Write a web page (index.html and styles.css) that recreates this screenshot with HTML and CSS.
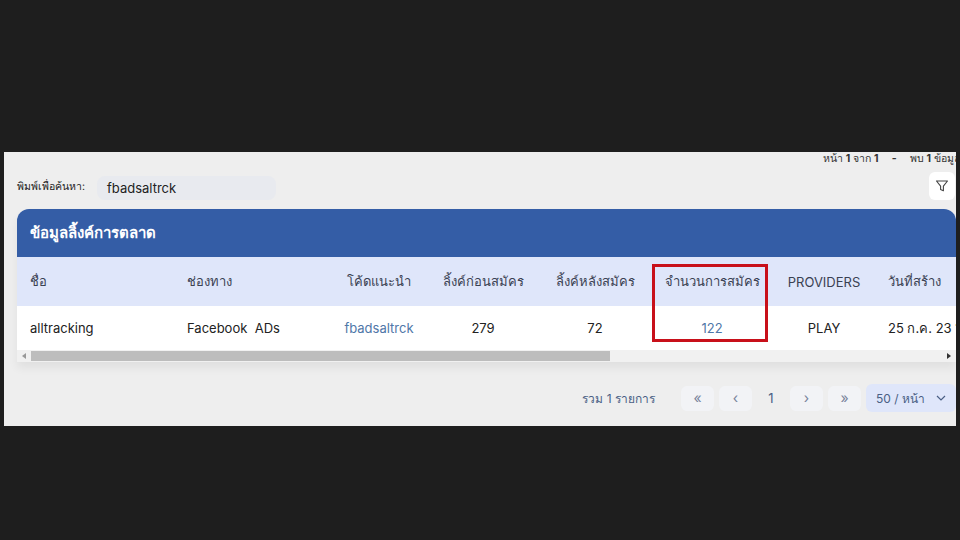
FILE: index.html
```html
<!DOCTYPE html>
<html lang="th">
<head>
    <meta charset="UTF-8">
    <meta name="viewport" content="width=device-width, initial-scale=1.0">
    <title>ข้อมูลลิ้งค์การตลาด</title>
    <link rel="stylesheet" href="styles.css">
</head>
<body>
    <div class="screen">
        <div class="page-info">
            <span>หน้า <b>1</b> จาก <b>1</b></span>
            <b class="dash">-</b>
            <span>พบ <b>1</b> ข้อมูล</span>
        </div>

        <div class="search-row">
            <label class="search-label">พิมพ์เพื่อค้นหา:</label>
            <div class="search-input">fbadsaltrck</div>
            <button class="filter-btn">
                <svg width="14" height="14" viewBox="0 0 14 14" fill="none" stroke="#444" stroke-width="1.1" stroke-linejoin="round">
                    <path d="M1.5 2h11L8.4 7.2v4.6L5.6 10.4V7.2z"/>
                </svg>
            </button>
        </div>

        <div class="card">
            <div class="card-title">ข้อมูลลิ้งค์การตลาด</div>
            <div class="table-wrap">
                <div class="table-row table-head">
                    <div class="cell left">ชื่อ</div>
                    <div class="cell left">ช่องทาง</div>
                    <div class="cell">โค้ดแนะนำ</div>
                    <div class="cell">ลิ้งค์ก่อนสมัคร</div>
                    <div class="cell">ลิ้งค์หลังสมัคร</div>
                    <div class="cell">จำนวนการสมัคร</div>
                    <div class="cell">PROVIDERS</div>
                    <div class="cell date">วันที่สร้าง</div>
                </div>
                <div class="table-row table-body">
                    <div class="cell left">alltracking</div>
                    <div class="cell left">Facebook&nbsp; ADs</div>
                    <div class="cell link">fbadsaltrck</div>
                    <div class="cell">279</div>
                    <div class="cell">72</div>
                    <div class="cell link">122</div>
                    <div class="cell">PLAY</div>
                    <div class="cell date">25 ก.ค. 23 12:00</div>
                </div>
            </div>
            <div class="scrollbar">
                <span class="arrow arrow-left"></span>
                <div class="scroll-track"><div class="scroll-thumb"></div></div>
                <span class="arrow arrow-right"></span>
            </div>
        </div>

        <div class="pagination">
            <span class="total">รวม 1 รายการ</span>
            <button class="page-btn">«</button>
            <button class="page-btn">‹</button>
            <span class="page-num">1</span>
            <button class="page-btn">›</button>
            <button class="page-btn">»</button>
            <div class="per-page">
                <span>50 / หน้า</span>
                <svg width="10" height="6" viewBox="0 0 10 6" fill="none" stroke="#4a5f85" stroke-width="1.2">
                    <path d="M1 1l4 4 4-4"/>
                </svg>
            </div>
        </div>

        <div class="highlight-box"></div>
    </div>
</body>
</html>
```

FILE: styles.css
```css
body {
    margin: 0;
    height: 540px;
    overflow: hidden;
    background-color: #1e1e1e;
    font-family: Inter, "Noto Sans", sans-serif;
    color: #222;
}

button {
    font-family: inherit;
    border: none;
    padding: 0;
}

.screen {
    position: relative;
    width: 952px;
    height: 274px;
    margin: 152px 0 0 4px;
    overflow: hidden;
    background-color: #eeeeee;
}

.page-info {
    display: flex;
    justify-content: flex-end;
    gap: 13px;
    height: 14px;
    margin-right: -4px;
    font-size: 10.5px;
    line-height: 14px;
    color: #333;
    white-space: nowrap;
}

.search-row {
    display: flex;
    align-items: center;
    height: 30px;
    margin-top: 5px;
    padding: 0 1px 0 13px;
}

.search-label {
    width: 80px;
    font-size: 10.5px;
}

.search-input {
    width: 169px;
    height: 24px;
    margin-top: 4px;
    padding-left: 10px;
    border-radius: 8px;
    background-color: #e8eaef;
    font-size: 13px;
    line-height: 24px;
}

.filter-btn {
    display: flex;
    align-items: center;
    justify-content: center;
    width: 26px;
    height: 28px;
    margin-left: auto;
    border-radius: 6px;
    background-color: #fff;
}

.card {
    width: 939px;
    margin: 8px 0 0 13px;
    border-radius: 12px 12px 0 0;
    box-shadow: 0 6px 10px rgba(0, 0, 0, 0.06);
    overflow: hidden;
}

.card-title {
    height: 48px;
    padding-left: 13px;
    background-color: #345da6;
    color: #fff;
    font-size: 15px;
    font-weight: 700;
    line-height: 48px;
}

.table-wrap {
    overflow: hidden;
}

.table-row {
    display: grid;
    grid-template-columns: 157px 155px 100px 108px 116px 118px 106px 140px;
    align-items: center;
    width: 1000px;
    font-size: 13px;
}

.table-head {
    height: 49px;
    background-color: #dfe6fa;
    color: #3a4152;
}

.table-body {
    height: 44px;
    background-color: #fff;
}

.cell {
    text-align: center;
    white-space: nowrap;
}

.left {
    padding-left: 13px;
    text-align: left;
}

.date {
    padding-left: 11px;
    text-align: left;
}

.link {
    color: #4f77a8;
}

.scrollbar {
    display: flex;
    align-items: center;
    height: 12px;
    background-color: #f1f1f1;
}

.arrow {
    width: 0;
    height: 0;
    border-top: 3px solid transparent;
    border-bottom: 3px solid transparent;
}

.arrow-left {
    margin: 0 5px 0 5px;
    border-right: 4px solid #999;
}

.arrow-right {
    margin: 0 5px 0 5px;
    border-left: 4px solid #333;
}

.scroll-track {
    flex: 1;
    height: 10px;
}

.scroll-thumb {
    width: 579px;
    height: 10px;
    background-color: #bdbdbd;
}

.pagination {
    display: flex;
    align-items: center;
    justify-content: flex-end;
    height: 28px;
    margin-top: 22px;
    font-size: 12px;
    color: #4a5f85;
}

.total {
    margin-right: 26px;
}

.page-btn {
    width: 33px;
    height: 25px;
    margin-right: 5px;
    border-radius: 6px;
    background-color: #f2f3f6;
    color: #77829a;
    font-size: 14px;
    line-height: 22px;
}

.page-num {
    width: 28px;
    text-align: center;
    font-size: 13px;
    margin-right: 5px;
}

.per-page {
    display: flex;
    align-items: center;
    justify-content: space-between;
    width: 90px;
    height: 28px;
    box-sizing: border-box;
    padding: 0 10px;
    border-radius: 6px;
    background-color: #dfe6fa;
}

/* red marker drawn over the table */
.highlight-box {
    position: absolute;
    left: 648px;
    top: 112px;
    width: 110px;
    height: 72px;
    border: 3px solid #c8101a;
}
```
